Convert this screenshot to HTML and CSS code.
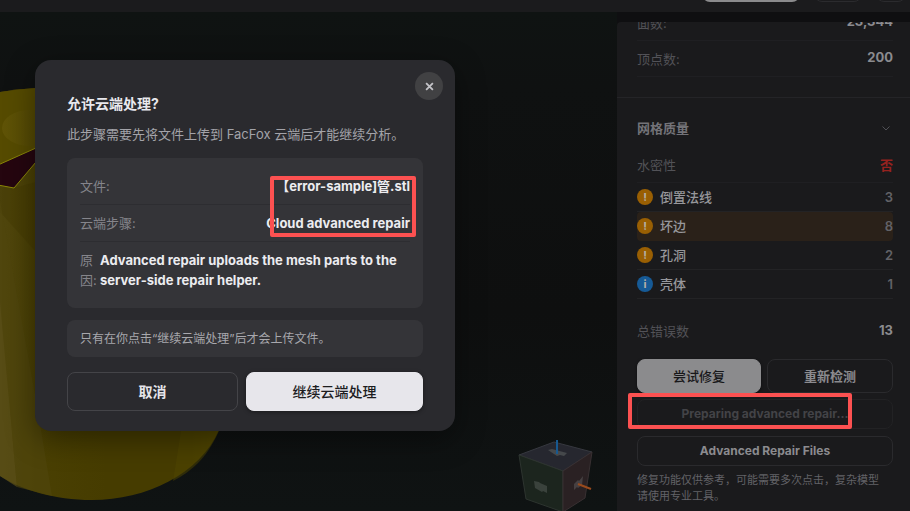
FILE: index.html
```html
<!doctype html>
<html lang="zh-CN">
  <head>
    <meta charset="UTF-8">
    <meta name="viewport" content="width=device-width, initial-scale=1">
    <title>FacFox</title>
    <link rel="stylesheet" href="styles.css">
  </head>
  <body>
    <header class="topbar">
      <button class="topbar-btn primary" type="button" aria-label="上传"></button>
      <button class="topbar-btn medium" type="button" aria-label="语言"></button>
      <button class="topbar-btn small" type="button" aria-label="设置"></button>
    </header>

    <main class="workspace">
      <section class="viewport">
        <svg class="scene" viewBox="0 0 617 499" preserveAspectRatio="xMinYMin slice" aria-hidden="true">
          <defs>
            <linearGradient id="body" x1="0" x2="236" y1="0" y2="0" gradientUnits="userSpaceOnUse">
              <stop offset="0" stop-color="#51470f"/>
              <stop offset="0.15" stop-color="#4a4003"/>
              <stop offset="0.45" stop-color="#463c00"/>
              <stop offset="0.8" stop-color="#463c00"/>
              <stop offset="1" stop-color="#544900"/>
            </linearGradient>
            <linearGradient id="dimple" x1="0" x2="1" y1="0" y2="0">
              <stop offset="0" stop-color="#605407"/>
              <stop offset="1" stop-color="#4c4200"/>
            </linearGradient>
          </defs>
          <!-- cylinder -->
          <path fill="url(#body)" d="M0 80 Q18 77 36 76 L200 76 L236 300 C234 350 230 392 219 418 C200 462 146 488 92 488 C54 488 22 478 0 464z"/>
          <path fill="#564b00" d="M0 80 Q18 77 36 76 V137 L0 153z"/>
          <ellipse cx="30" cy="116" rx="28" ry="18" fill="url(#dimple)"/>
          <path fill="#403600" d="M0 173 L14 176 L36 170 V240 L0 200z" opacity=".3"/>
          <path fill="#5a4f18" d="M0 285 L17 475 L0 464z" opacity=".7"/>
          <path fill="#50460d" d="M0 188 L36 388 L52 484 L17 475 L0 290z" opacity=".6"/>
          <path fill="#4f4500" d="M181 419 H219 C206 448 190 460 173 469z" opacity=".5"/>
          <!-- open hole -->
          <path fill="#25060f" stroke="#8b8707" d="M-2 153 L36 136 V150 L14 176 L-2 173z"/>
          <!-- orientation cube -->
          <path fill="#26272f" stroke="#36383f" d="M519 443 L554 430 L592 440 L563 459z"/>
          <path fill="#1c251e" stroke="#2d342f" d="M519 443 L563 459 L563 500 L526 487z"/>
          <path fill="#2a2123" stroke="#383032" d="M563 459 L592 440 L585 486 L563 500z"/>
          <path fill="#45484b" d="M548 438 l4 -1 15 4 -3 3 -4 -1 -3 1z"/>
          <path fill="#3a423c" d="M534 469 l5 1 1 1 7 3 0 7 -4 -2 -1 1 -7 -4z"/>
          <path fill="#464042" d="M574 472 l4 -4 1 1 4 -5 -1 9 -4 3 -1 -1 -3 3z"/>
          <path fill="none" stroke="#17588f" stroke-width="2" d="M557 428 V442"/>
          <path fill="none" stroke="#984a1d" stroke-width="2" d="M578 472 L591 477"/>
        </svg>
      </section>

      <aside class="sidebar">
        <div class="panel">
          <section class="panel-section stats">
            <div class="stat-row"><span>面数:</span><strong>23,344</strong></div>
            <div class="stat-row"><span>顶点数:</span><strong>200</strong></div>
          </section>

          <section class="panel-section">
            <div class="section-head">
              <h2>网格质量</h2>
              <svg class="chevron" viewBox="0 0 8 5" aria-hidden="true"><path d="M.5 .5 L4 4 L7.5 .5"/></svg>
            </div>
            <div class="stat-row"><span>水密性</span><strong class="bad">否</strong></div>
            <ul class="issues">
              <li><span class="badge warn">!</span><span class="issue-name">倒置法线</span><span class="count">3</span></li>
              <li class="active"><span class="badge warn">!</span><span class="issue-name">坏边</span><span class="count">8</span></li>
              <li><span class="badge warn">!</span><span class="issue-name">孔洞</span><span class="count">2</span></li>
              <li><span class="badge info">i</span><span class="issue-name">壳体</span><span class="count">1</span></li>
            </ul>
            <div class="stat-row total"><span>总错误数</span><strong>13</strong></div>

            <div class="repair-actions">
              <button class="side-btn solid" type="button">尝试修复</button>
              <button class="side-btn" type="button">重新检测</button>
            </div>
            <div class="preparing">
              <button class="side-btn wide" type="button" disabled>Preparing advanced repair...</button>
              <span class="marker"></span>
            </div>
            <button class="side-btn wide" type="button">Advanced Repair Files</button>
            <p class="hint">修复功能仅供参考，可能需要多次点击，复杂模型请使用专业工具。</p>
          </section>
        </div>
      </aside>
    </main>

    <div class="modal" role="dialog" aria-labelledby="modal-title">
      <button class="close" type="button" aria-label="关闭">
        <svg viewBox="0 0 8 8" aria-hidden="true"><path d="M1 1 L7 7 M7 1 L1 7"/></svg>
      </button>
      <h1 id="modal-title">允许云端处理?</h1>
      <p class="lead">此步骤需要先将文件上传到 FacFox 云端后才能继续分析。</p>

      <div class="details">
        <dl>
          <div class="detail-row"><dt>文件:</dt><dd>【error-sample]管.stl</dd></div>
          <div class="detail-row"><dt>云端步骤:</dt><dd>Cloud advanced repair</dd></div>
          <div class="detail-row reason"><dt>原因:</dt><dd>Advanced repair uploads the mesh parts to the server-side repair helper.</dd></div>
        </dl>
        <span class="marker"></span>
      </div>

      <p class="note">只有在你点击“继续云端处理”后才会上传文件。</p>

      <div class="modal-actions">
        <button class="cancel" type="button">取消</button>
        <button class="confirm" type="button">继续云端处理</button>
      </div>
    </div>
  </body>
</html>
```
FILE: styles.css
```css
* {
  box-sizing: border-box;
}

body {
  margin: 0;
  height: 100vh;
  display: flex;
  flex-direction: column;
  overflow: hidden;
  position: relative;
  background: #0f1312;
  color: #e5e5ea;
  font-family: Inter, "Noto Sans CJK SC", sans-serif;
  font-size: 13px;
  line-height: 20px;
}

h1, h2, p, dl, dd, ul {
  margin: 0;
  padding: 0;
}

button {
  font: inherit;
  font-weight: 600;
  cursor: pointer;
}

/* top bar */
.topbar {
  flex: none;
  height: 12px;
  padding: 0 4px 10px 0;
  display: flex;
  justify-content: flex-end;
  align-items: flex-end;
  gap: 14px;
  overflow: hidden;
  background: #1b1b1d;
}

.topbar-btn {
  flex: none;
  height: 32px;
  border: 1px solid #2b2b2e;
  border-radius: 8px;
  background: none;
}

.topbar-btn.primary {
  width: 98px;
  border: 0;
  background: #8b8b8d;
}

.topbar-btn.medium {
  width: 48px;
}

.topbar-btn.small {
  width: 30px;
}

/* workspace */
.workspace {
  flex: 1;
  min-height: 0;
  display: flex;
}

.viewport {
  flex: 1;
  min-width: 0;
  background: linear-gradient(#0f1312, #0f1111 15%, #0e0f0f 60%, #0f1313);
}

.scene {
  display: block;
  width: 100%;
  height: 100%;
}

.sidebar {
  flex: none;
  width: 293px;
  padding-top: 10px;
  display: flex;
  background: #0f0f11;
}

.panel {
  flex: 1;
  overflow: hidden;
  border-radius: 4px 0 0 0;
  background: #1a1a1c;
}

.panel-section {
  padding: 20px 17px 20px 20px;
}

.panel-section.stats {
  margin-top: -17px;
  padding-top: 0;
  border-bottom: 1px solid #242427;
}

.stat-row {
  height: 36px;
  display: flex;
  justify-content: space-between;
  align-items: center;
  border-bottom: 1px solid #1f1f22;
  color: #525257;
}

.stat-row strong {
  font-weight: 700;
  padding-bottom: 3px;
  color: #8b8b8f;
}

.stat-row .bad {
  padding-bottom: 0;
  color: #96221f;
}

.section-head {
  display: flex;
  justify-content: space-between;
  align-items: center;
  padding-right: 3px;
  margin-bottom: 9px;
}

.section-head h2 {
  font-size: 13px;
  line-height: 20px;
  font-weight: 600;
  color: #737378;
}

.chevron {
  width: 8px;
  height: 5px;
  fill: none;
  stroke: #505055;
}

.issues {
  list-style: none;
}

.issues li {
  height: 29px;
  display: flex;
  align-items: center;
  border-bottom: 1px solid #232325;
  color: #97979b;
  font-weight: 500;
}

.issues .active {
  border-color: transparent;
  border-radius: 4px;
  background: #2a2119;
}

.badge {
  width: 16px;
  height: 16px;
  margin-right: 7px;
  border-radius: 50%;
  font-size: 11px;
  font-weight: 700;
  line-height: 16px;
  text-align: center;
  color: #b5b0a8;
}

.badge.warn {
  background: #995f03;
}

.badge.info {
  background: #165a96;
}

.issue-name {
  flex: 1;
}

.count {
  font-weight: 600;
  color: #626267;
}

.stat-row.total {
  margin: 14px 0 10px;
  border-bottom: 0;
}

.repair-actions {
  display: flex;
  gap: 6px;
}

.side-btn {
  flex: 64;
  height: 34px;
  padding: 0;
  border: 1px solid #2a2a2d;
  border-radius: 8px;
  background: #1a1a1c;
  color: #8b8b8f;
}

.side-btn.solid {
  flex: 63;
  border-color: #8b8b8d;
  background: #8b8b8d;
  color: #18181a;
  font-weight: 500;
  box-shadow: 0 1px 3px rgba(0, 0, 0, 0.5);
}

.side-btn.wide {
  width: 100%;
  height: 30px;
  font-size: 12px;
  font-weight: 700;
}

.side-btn:disabled {
  border-color: #222224;
  color: #434347;
}

.preparing {
  position: relative;
  margin: 6px 0 7px;
  display: flex;
}

.marker {
  position: absolute;
  border: 4px solid #fc5151;
  border-radius: 2px;
  pointer-events: none;
}

.preparing .marker {
  top: -6px;
  left: -9px;
  width: 224px;
  height: 36px;
}

.hint {
  margin-top: 6px;
  padding-right: 10px;
  font-size: 11px;
  line-height: 16px;
  color: #626267;
}

/* dialog */
.modal {
  position: absolute;
  top: 60px;
  left: 35px;
  width: 420px;
  padding: 34px 32px 20px;
  border-radius: 16px;
  background: #2a2a2e;
  box-shadow: 0 8px 30px rgba(0, 0, 0, 0.4);
}

.modal h1 {
  font-size: 14px;
  line-height: 20px;
  font-weight: 700;
  color: #e8e8ed;
}

.lead {
  margin: 10px 0 14px;
  font-size: 13px;
  color: #a3a3a9;
}

.close {
  position: absolute;
  top: 12px;
  right: 12px;
  width: 28px;
  height: 28px;
  padding: 0;
  display: flex;
  justify-content: center;
  align-items: center;
  border: 0;
  border-radius: 50%;
  background: #414143;
}

.close svg {
  width: 9px;
  height: 9px;
  fill: none;
  stroke: #c4c4c8;
  stroke-width: 1.6;
}

.details {
  position: relative;
  padding: 10px 13px 9px;
  border-radius: 8px;
  background: #343438;
}

.detail-row {
  padding: 8px 0;
  display: flex;
  justify-content: space-between;
  border-bottom: 1px solid #2d2d31;
}

.detail-row.reason {
  gap: 4px;
  border-color: transparent;
}

.reason dt {
  width: 16px;
  flex: none;
}

.detail-row dt {
  color: #85858b;
}

.detail-row dd {
  font-weight: 700;
  color: #ececf0;
}

.details .marker {
  top: 18px;
  right: 7px;
  width: 146px;
  height: 61px;
}

.note {
  margin: 12px 0 15px;
  padding: 9px 13px;
  border-radius: 8px;
  background: #343438;
  font-size: 12px;
  line-height: 19px;
  color: #a8a8ad;
}

.modal-actions {
  display: flex;
  gap: 8px;
}

.modal-actions button {
  height: 39px;
  padding: 0;
  border: 1px solid #444448;
  border-radius: 8px;
  font-size: 14px;
}

.modal-actions .cancel {
  flex: 28;
  background: #2a2a2e;
  color: #e5e5ea;
}

.modal-actions .confirm {
  flex: 29;
  border-color: #e7e6eb;
  background: #e7e6eb;
  color: #1c1c1e;
  font-weight: 500;
  box-shadow: 0 1px 4px rgba(0, 0, 0, 0.4);
}
```
